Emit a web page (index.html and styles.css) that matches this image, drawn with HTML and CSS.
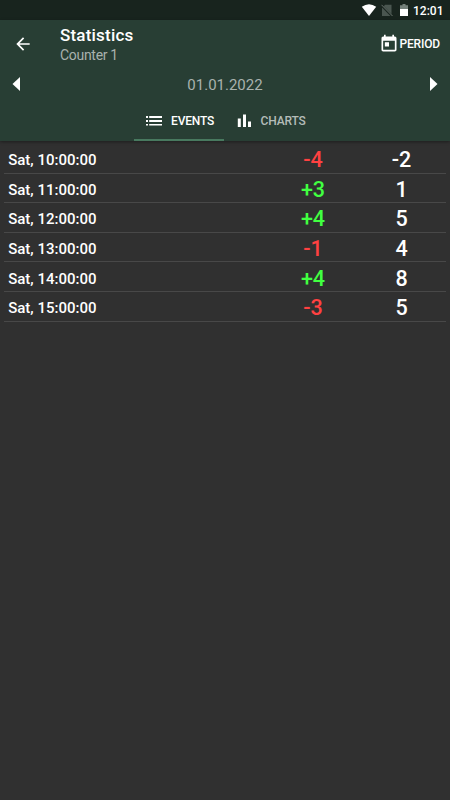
FILE: index.html
```html
<!DOCTYPE html>
<html lang="en">
<head>
<meta charset="utf-8">
<title>Statistics</title>
<link rel="stylesheet" href="styles.css">
</head>
<body>
<div class="status">
  <svg class="wifi" width="16" height="12" viewBox="0 0 16 12"><path d="M0.8 2.8Q8-2.2 15.2 2.8L8 12Z" fill="#fff"/></svg>
  <svg class="sim" width="12" height="13" viewBox="0 0 12 13"><path d="M4.2.8H10.5V12H1V4Z" fill="#4a5650"/><path d="M0 1 11.5 12.5" stroke="#18241e" stroke-width="2.2"/><path d="M.5.8 11.5 12" stroke="#68726d" stroke-width="1"/></svg>
  <svg class="battery" width="8" height="12" viewBox="0 0 8 12"><path d="M2.5 0h3v1.3H8V5H0V1.3h2.5Z" fill="#74807a"/><path d="M0 5h8v7H0Z" fill="#fff"/></svg>
  <span class="clock">12:01</span>
</div>
<header class="header">
  <div class="toolbar">
    <svg class="back" width="20" height="20" viewBox="0 0 24 24"><path d="M20 11H7.83l5.59-5.59L12 4l-8 8 8 8 1.41-1.41L7.83 13H20v-2z" fill="#fff"/></svg>
    <div class="titles">
      <h1 class="title">Statistics</h1>
      <div class="subtitle">Counter 1</div>
    </div>
    <div class="period">
      <svg width="20" height="20" viewBox="0 0 24 24"><path d="M19 3h-1V1h-2v2H8V1H6v2H5c-1.11 0-1.99.9-1.99 2L3 19c0 1.1.89 2 2 2h14c1.1 0 2-.9 2-2V5c0-1.1-.9-2-2-2zm0 16H5V8h14v11zM7 10h5v5H7z" fill="#fff"/></svg>
      <span>PERIOD</span>
    </div>
  </div>
  <div class="pager">
    <svg width="8" height="14" viewBox="0 0 8 14"><path d="M8 0V14L.5 7Z" fill="#fff"/></svg>
    <span class="date">01.01.2022</span>
    <svg width="8" height="14" viewBox="0 0 8 14"><path d="M0 0V14L7.5 7Z" fill="#fff"/></svg>
  </div>
  <nav class="tabs">
    <div class="tab active">
      <svg width="16" height="14" viewBox="0 0 16 14"><path d="M0 2h2v2H0zM3.2 2H16v2H3.2zM0 6h2v2H0zM3.2 6H16v2H3.2zM0 10h2v1.6H0zM3.2 10H16v1.6H3.2z" fill="#fff"/></svg>
      <span>EVENTS</span>
    </div>
    <div class="tab">
      <svg width="16" height="14" viewBox="0 0 16 14"><path d="M1.8 4.5h3V13h-3zM7 .5h3V13H7zM12 7.5h3V13h-3z" fill="#fff"/></svg>
      <span>CHARTS</span>
    </div>
  </nav>
</header>
<main class="events">
  <div class="row"><span>Sat, 10:00:00</span><b class="minus">-4</b><b>-2</b></div>
  <div class="row"><span>Sat, 11:00:00</span><b class="plus">+3</b><b>1</b></div>
  <div class="row"><span>Sat, 12:00:00</span><b class="plus">+4</b><b>5</b></div>
  <div class="row"><span>Sat, 13:00:00</span><b class="minus">-1</b><b>4</b></div>
  <div class="row"><span>Sat, 14:00:00</span><b class="plus">+4</b><b>8</b></div>
  <div class="row"><span>Sat, 15:00:00</span><b class="minus">-3</b><b>5</b></div>
</main>
</body>
</html>
```
FILE: styles.css
```css
* { box-sizing: border-box; }
body {
  margin: 0;
  height: 800px;
  overflow: hidden;
  background: #303030;
  color: #fff;
  font-family: Roboto, "Liberation Sans", sans-serif;
}
svg { display: block; flex: none; }
.status {
  height: 20px;
  background: #18241e;
  display: flex;
  align-items: center;
  justify-content: flex-end;
  padding-right: 7px;
}
.sim { margin-left: 4px; }
.battery { margin-left: 7px; }
.clock {
  width: 30px;
  margin-left: 5px;
  font-size: 12px;
  font-weight: 500;
  line-height: 20px;
  padding-top: 1px;
  white-space: nowrap;
}
.header {
  height: 121px;
  background: #283e34;
  box-shadow: 0 1px 3px rgba(0, 0, 0, .4);
}
.toolbar {
  height: 47px;
  display: flex;
  align-items: center;
  padding: 0 10px 0 13px;
}
.titles { margin-left: 27px; flex: 1; padding-top: 2px; }
.title {
  margin: 0;
  font-size: 17px;
  letter-spacing: .2px;
  line-height: 21px;
  font-weight: 500;
}
.subtitle {
  font-size: 14px;
  letter-spacing: -.3px;
  line-height: 19px;
  color: #a9b2ae;
}
.period {
  display: flex;
  align-items: center;
  font-size: 12px;
  letter-spacing: -.15px;
  font-weight: 500;
}
.pager {
  height: 34px;
  display: flex;
  align-items: center;
  justify-content: space-between;
  padding: 0 12px;
}
.date { font-size: 15px; color: #a9b2ae; padding-top: 1px; }
.tabs {
  height: 40px;
  display: flex;
  justify-content: center;
  padding-right: 2px;
}
.tab {
  width: 90px;
  display: flex;
  align-items: center;
  gap: 9px;
  padding: 2px 0 0 11.5px;
  border-bottom: 2px solid transparent;
  font-size: 12px;
  letter-spacing: -.15px;
  font-weight: 500;
  color: #b4bcb8;
}
.active { color: #fff; border-color: #48795f; padding-left: 12px; }
.events { padding: 3px 4px 0; }
.row {
  height: 29.6px;
  display: grid;
  grid-template-columns: 265px 88px 89px;
  align-items: center;
  border-bottom: 1px solid #484848;
  padding-top: 3px;
}
.row span {
  padding: 1px 0 0 4.2px;
  font-size: 15px;
  font-weight: 500;
}
.row b {
  text-align: center;
  font-size: 21.5px;
  line-height: 25px;
  font-weight: 500;
}
.row .minus { color: #ff4141; }
.row .plus { color: #41ff41; }
```
